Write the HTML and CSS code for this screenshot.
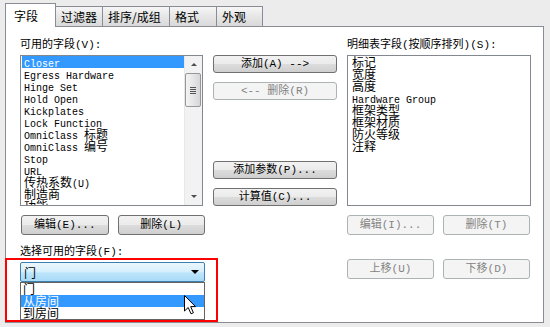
FILE: index.html
```html
<!DOCTYPE html>
<html lang="zh-CN">
<head>
    <meta charset="UTF-8">
    <title>明细表属性</title>
    <link rel="stylesheet" href="styles.css">
</head>
<body>

<div class="dialog">
    <div class="tabs">
        <div class="tab active">字段</div>
        <div class="tab w48">过滤器</div>
        <div class="tab w68">排序/成组</div>
        <div class="tab w48">格式</div>
        <div class="tab w47">外观</div>
    </div>

    <div class="panel">
        <div class="col left">
            <div class="label">可用的字段(V):</div>
            <div class="listbox">
                <div class="items">
                    <div class="item selected"><span class="en">Closer</span></div>
                    <div class="item"><span class="en">Egress Hardware</span></div>
                    <div class="item"><span class="en">Hinge Set</span></div>
                    <div class="item"><span class="en">Hold Open</span></div>
                    <div class="item"><span class="en">Kickplates</span></div>
                    <div class="item"><span class="en">Lock Function</span></div>
                    <div class="item"><span class="en">OmniClass </span>标题</div>
                    <div class="item"><span class="en">OmniClass </span>编号</div>
                    <div class="item"><span class="en">Stop</span></div>
                    <div class="item"><span class="en">URL</span></div>
                    <div class="item">传热系数<span class="en">(U)</span></div>
                    <div class="item">制造商</div>
                    <div class="item">功能</div>
                </div>
                <div class="scrollbar">
                    <div class="arrow-btn"><span class="arrow up"></span></div>
                    <div class="track">
                        <div class="thumb"><span></span><span></span><span></span><span></span></div>
                    </div>
                    <div class="arrow-btn"><span class="arrow down"></span></div>
                </div>
            </div>
            <div class="btn-row">
                <button class="btn">编辑(E)...</button>
                <button class="btn">删除(L)</button>
            </div>
            <div class="label pick">选择可用的字段(F):</div>
            <div class="combo">
                <span class="combo-text">门</span>
                <span class="combo-arrow"></span>
                <div class="dropdown">
                    <div class="item">门</div>
                    <div class="item selected">从房间</div>
                    <div class="item">到房间</div>
                </div>
            </div>
        </div>

        <div class="col middle">
            <button class="btn">添加(A) --&gt;</button>
            <button class="btn disabled">&lt;-- 删除(R)</button>
            <button class="btn far">添加参数(P)...</button>
            <button class="btn">计算值(C)...</button>
        </div>

        <div class="col right">
            <div class="label">明细表字段(按顺序排列)(S):</div>
            <div class="listbox plain">
                <div class="items">
                    <div class="item">标记</div>
                    <div class="item">宽度</div>
                    <div class="item">高度</div>
                    <div class="item"><span class="en">Hardware Group</span></div>
                    <div class="item">框架类型</div>
                    <div class="item">框架材质</div>
                    <div class="item">防火等级</div>
                    <div class="item">注释</div>
                </div>
            </div>
            <div class="btn-row">
                <button class="btn disabled">编辑(I)...</button>
                <button class="btn disabled">删除(T)</button>
            </div>
            <div class="btn-row move">
                <button class="btn disabled">上移(U)</button>
                <button class="btn disabled">下移(D)</button>
            </div>
        </div>
    </div>

    <div class="mark"></div>
    <svg class="cursor" width="13" height="20" viewBox="0 0 13 20">
        <polygon points="0.5,0.5 0.5,16 4.2,12.5 7,18.8 9.4,17.8 6.7,11.6 11.5,11.6" fill="#fff" stroke="#000" stroke-width="1"/>
    </svg>
</div>

</body>
</html>
```

FILE: styles.css
```css
body {
    margin: 0;
    background-color: #ececec;
    font-family: "Liberation Mono", "Noto Sans CJK SC", monospace;
    font-size: 11px;
    color: #000;
}
.dialog {
    position: relative;
    width: 550px;
    height: 327px;
    box-sizing: border-box;
    padding: 3px 6px 0 5px;
}

/* tabs */
.tabs {
    display: flex;
    align-items: flex-end;
    height: 23px;
}
.tab {
    box-sizing: border-box;
    height: 20px;
    margin-left: -1px;
    padding: 3px 0 0 5px;
    border: 1px solid #898c95;
    border-bottom: none;
    background: linear-gradient(#f6f6f6, #e6e6e6 50%, #d9d9d9);
    font-family: "Noto Sans CJK SC", sans-serif;
    font-size: 12px;
    line-height: 14px;
}
.tab.active {
    position: relative;
    z-index: 1;
    width: 51px;
    height: 24px;
    margin-left: 0;
    margin-bottom: -1px;
    padding: 5px 0 0 8px;
    background: #fff;
}
.w48 { width: 48px; }
.w68 { width: 68px; }
.w47 { width: 47px; }

/* panel */
.panel {
    display: flex;
    box-sizing: border-box;
    height: 297px;
    padding: 12px 0 0 14px;
    border: 1px solid #898c95;
    background: #fff;
}
.col {
    display: flex;
    flex-direction: column;
}
.left { width: 185px; }
.middle { width: 124px; margin-left: 8px; padding-top: 16px; }
.right { width: 185px; margin-left: 10px; }

.label {
    height: 12px;
    line-height: 12px;
    margin-bottom: 4px;
    white-space: nowrap;
}
.label.pick {
    margin-top: 11px;
}

/* list boxes */
.listbox {
    display: flex;
    box-sizing: border-box;
    width: 183px;
    height: 151px;
    border: 1px solid #828790;
    background: #fff;
    overflow: hidden;
}
.listbox.plain {
    width: 184px;
}
.items {
    flex: 1;
    padding-left: 1px;
    overflow: hidden;
}
.plain .items {
    padding-left: 2px;
}
.item {
    height: 12px;
    padding-left: 2px;
    font-family: "Noto Sans CJK SC", sans-serif;
    font-size: 12px;
    line-height: 12px;
    white-space: nowrap;
}
.item .en {
    font-family: "Liberation Mono", monospace;
    font-size: 10px;
}
.item.selected {
    background: #3399ff;
    color: #fff;
}

.scrollbar {
    display: flex;
    flex-direction: column;
    width: 17px;
    background: #f2f2f2;
    border-left: 1px solid #e8e8e8;
}
.arrow-btn {
    display: flex;
    align-items: center;
    justify-content: center;
    height: 17px;
}
.arrow {
    width: 0;
    height: 0;
    border-left: 3px solid transparent;
    border-right: 3px solid transparent;
}
.arrow.up { border-bottom: 3px solid #4d4d4d; }
.arrow.down { border-top: 3px solid #4d4d4d; }
.track {
    flex: 1;
}
.thumb {
    display: flex;
    flex-direction: column;
    align-items: center;
    justify-content: center;
    gap: 1px;
    box-sizing: border-box;
    width: 16px;
    height: 34px;
    border: 1px solid #979797;
    border-radius: 2px;
    background: linear-gradient(to right, #f4f4f4, #e6e6e6 50%, #d6d6d6);
}
.thumb span {
    width: 6px;
    height: 1px;
    background: #555;
}

/* buttons */
.btn {
    box-sizing: border-box;
    height: 18px;
    padding: 0;
    border: 1px solid #707070;
    border-radius: 3px;
    background: linear-gradient(#f2f2f2, #ebebeb 50%, #dddddd 50%, #cfcfcf);
    font-family: "Liberation Mono", "Noto Sans CJK SC", monospace;
    font-size: 11px;
    line-height: 14px;
    color: #000;
    white-space: nowrap;
}
.btn.disabled {
    border-color: #adb2b5;
    background: #f4f4f4;
    color: #838383;
}
.middle .btn {
    width: 124px;
    margin-bottom: 9px;
}
.middle .btn.far {
    margin-top: 52px;
}
.btn-row {
    display: flex;
    gap: 9px;
    margin-top: 9px;
    padding-left: 1px;
}
.btn-row .btn {
    width: 88px;
    height: 20px;
}
.right .btn-row {
    padding-left: 0;
}
.right .btn-row .btn {
    width: 87px;
}
.btn-row.move {
    margin-top: 24px;
}

/* combo box */
.combo {
    position: relative;
    display: flex;
    align-items: center;
    justify-content: space-between;
    box-sizing: border-box;
    width: 185px;
    height: 20px;
    padding: 0 5px 0 3px;
    border: 1px solid #3c7fb1;
    border-radius: 2px;
    background: linear-gradient(#eaf6fd, #d9f0fc 45%, #bee6fd 55%, #a7d9f5);
    font-family: "Noto Sans CJK SC", sans-serif;
    font-size: 12px;
}
.combo-arrow {
    width: 0;
    height: 0;
    border-left: 4px solid transparent;
    border-right: 4px solid transparent;
    border-top: 4px solid #000;
}
.dropdown {
    position: absolute;
    top: 19px;
    left: -1px;
    box-sizing: border-box;
    width: 185px;
    height: 38px;
    border: 1px solid #646464;
    background: #fff;
}
.dropdown .item {
    padding-left: 2px;
}

/* annotation on top of the screenshot */
.mark {
    position: absolute;
    left: 5px;
    top: 258px;
    width: 213px;
    height: 64px;
    box-sizing: border-box;
    border: 2px solid #ff0000;
}
.cursor {
    position: absolute;
    left: 184px;
    top: 295px;
}
```
